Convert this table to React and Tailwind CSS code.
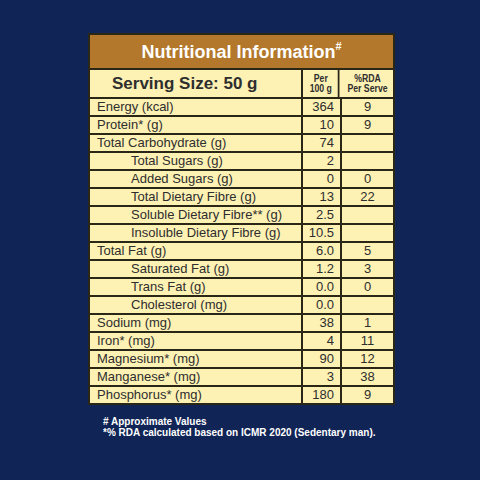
const rows = [
  { name: "Energy (kcal)", per: "364", rda: "9" },
  { name: "Protein* (g)", per: "10", rda: "9" },
  { name: "Total Carbohydrate (g)", per: "74", rda: "" },
  { name: "Total Sugars (g)", per: "2", rda: "", sub: true },
  { name: "Added Sugars (g)", per: "0", rda: "0", sub: true },
  { name: "Total Dietary Fibre (g)", per: "13", rda: "22", sub: true },
  { name: "Soluble Dietary Fibre** (g)", per: "2.5", rda: "", sub: true },
  { name: "Insoluble Dietary Fibre (g)", per: "10.5", rda: "", sub: true },
  { name: "Total Fat (g)", per: "6.0", rda: "5" },
  { name: "Saturated Fat (g)", per: "1.2", rda: "3", sub: true },
  { name: "Trans Fat (g)", per: "0.0", rda: "0", sub: true },
  { name: "Cholesterol (mg)", per: "0.0", rda: "", sub: true },
  { name: "Sodium (mg)", per: "38", rda: "1" },
  { name: "Iron* (mg)", per: "4", rda: "11" },
  { name: "Magnesium* (mg)", per: "90", rda: "12" },
  { name: "Manganese* (mg)", per: "3", rda: "38" },
  { name: "Phosphorus* (mg)", per: "180", rda: "9" },
];

export default function App() {
  return (
    <div
      className="w-[480px] h-[480px] bg-[#102456] pt-[33px] pl-[88px]"
      style={{ fontFamily: '"Liberation Sans", Arial, sans-serif' }}
    >
      {/* PANEL */}
      <div className="w-[307px] border-2 border-[#2b2717]">
        <div className="h-[33px] bg-[#b3782b] flex items-center justify-center text-white font-bold text-[18px] leading-none">
          Nutritional Information<sup className="text-[11px] -top-[6px]">#</sup>
        </div>

        <div className="bg-[#fdf1b4] text-[#2e2e2e]">
          {/* SERVING ROW */}
          <div className="grid grid-cols-[213px_39px_51px] h-[29px] border-t-2 border-[#2b2717]">
            <div className="border-r-2 border-[#2b2717] pl-[22px] flex items-center text-[17px] font-bold">
              Serving Size: 50 g
            </div>
            <div className="border-r-2 border-[#2b2717] flex flex-col items-center justify-center text-[10px] font-bold leading-[10px] pr-[2px] scale-x-[0.87]">
              <span>Per</span>
              <span>100 g</span>
            </div>
            <div className="flex flex-col items-center justify-center text-[10px] font-bold leading-[10px] scale-x-[0.87]">
              <span>%RDA</span>
              <span className="whitespace-nowrap">Per Serve</span>
            </div>
          </div>

          {/* ROWS */}
          {rows.map((row) => (
            <div
              key={row.name}
              className="grid grid-cols-[213px_39px_51px] h-[18px] border-t-2 border-[#2b2717] text-[13px] leading-[16px]"
            >
              <div
                className={`border-r-2 border-[#2b2717] ${
                  row.sub ? "pl-[41px]" : "pl-[7px]"
                }`}
              >
                {row.name}
              </div>
              <div className="border-r-2 border-[#2b2717] text-right pr-[6px]">
                {row.per}
              </div>
              <div className="text-center">{row.rda}</div>
            </div>
          ))}
        </div>
      </div>

      {/* NOTES */}
      <div className="mt-[11px] pl-[15px] text-white font-bold text-[10px] leading-[11px]">
        <div># Approximate Values</div>
        <div>*% RDA calculated based on ICMR 2020 (Sedentary man).</div>
      </div>
    </div>
  );
}
